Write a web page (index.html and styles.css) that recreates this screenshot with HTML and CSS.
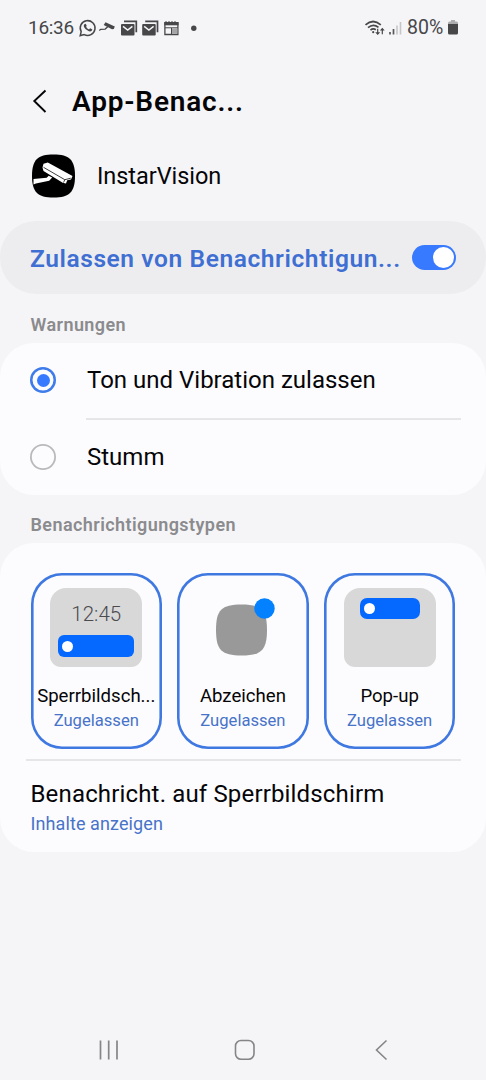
FILE: index.html
```html
<!DOCTYPE html>
<html lang="de">
<head>
<meta charset="utf-8">
<meta name="viewport" content="width=device-width, initial-scale=1">
<title>App-Benachrichtigungen</title>
<link rel="stylesheet" href="styles.css">
</head>
<body>
<div class="screen">
  <header class="status">
    <span class="clock">16:36</span>
    <svg class="status-icons" width="122" height="20" viewBox="0 0 122 20">
      <path d="M2.2 17.6 3.2 13.7A7.400 7.400 0 1 1 6.200 16.600Z" fill="none" stroke="#47474a" stroke-width="1.500"/>
      <path d="M6.400 6.200q1-.9 1.700.2l.5 1.200q.2.5-.5 1.200 1 1.900 2.900 2.700l.9-1q.3-.3.8 0l1.300.8q.7.500-.1 1.300-1.400 1.500-3.500.5Q7.200 11.600 6 9q-.7-1.800.4-2.800Z" fill="#47474a"/>
      <path d="m27.500 4.300 9.300 4.200-1 2.500-1.800.3-8.300-4.200Z" fill="#47474a"/>
      <path d="m29.700 8.800-2.500 2.300-4.500.2-1.400 1.200" fill="none" stroke="#47474a" stroke-width="1.300"/>
      <g id="mail">
        <path d="M46 3.300h12.300v11" fill="none" stroke="#47474a" stroke-width="1.700"/>
        <rect x="43" y="6" width="13.500" height="11.600" rx="1" fill="#47474a"/>
        <path d="m45 8.300 4.700 3.700 4.700-3.700" fill="none" stroke="#f5f5f8" stroke-width="1.500"/>
      </g>
      <use href="#mail" x="21.200"/>
      <path d="M86.900 4.800h13v11.700h-13Z" fill="none" stroke="#47474a" stroke-width="1.300"/>
      <path d="M86.300 4h14.200v3.300H86.300Z" fill="#47474a"/>
      <path d="M88 3v2M91 3v2M94 3v2M97 3v2" stroke="#47474a"/>
      <path d="M86.900 9.800h13M93.500 10v6.500" stroke="#47474a"/>
      <path d="M94 10.300h5.300v5.500H94Z" fill="#a5a5a8"/>
      <circle cx="115.800" cy="10.300" r="2.700" fill="#47474a"/>
    </svg>
    <span class="status-gap"></span>
    <svg class="signal" width="40" height="20" viewBox="0 0 40 20" fill="none">
      <path d="M1.500 6.800Q9 .2 16.800 6.800M4 9.600Q9.200 5.200 14.500 9.300M6.500 12.200Q9 10 11.800 11.800" stroke="#47474a" stroke-width="1.700"/>
      <circle cx="9.200" cy="14.200" r="1.100" fill="#47474a"/>
      <path d="M13.700 10.700v5M18.300 11.300v4.900" stroke="#47474a" stroke-width="1.200"/>
      <path d="m11.200 14.200 2.500 2.900 2.500-2.900ZM15.900 12.600l2.400-2.900 2.400 2.900Z" fill="#47474a"/>
      <path d="M26 14v2.500M29.500 11v5.500" stroke="#58585b" stroke-width="1.700"/>
      <path d="M33 7.500v9M36.500 4v12.500" stroke="#c6c6c9" stroke-width="1.600"/>
    </svg>
    <span class="percent">80%</span>
    <svg class="battery" width="10" height="15" viewBox="0 0 10 15">
      <path d="M3 0h4v1.500h1.500Q10 1.500 10 3v2H0V3Q0 1.500 1.500 1.500H3Z" fill="#adadb0"/>
      <path d="M0 4h10v9q0 1.500-1.500 1.500h-7Q0 14.500 0 13Z" fill="#47474a"/>
    </svg>
  </header>

  <div class="titlebar">
    <svg class="back" width="15" height="24" viewBox="0 0 15 24"><path d="M13.500 1.500 2.300 12l11.200 11" fill="none" stroke="#050508" stroke-width="1.900"/></svg>
    <h1 class="title">App-Benac...</h1>
  </div>

  <div class="app">
    <svg class="app-icon" width="44" height="44" viewBox="0 0 44 44">
      <path d="M22.500.5C38.500.5 44 6 44 22s-5.500 21.500-21.500 21.500S1 38 1 22 6.500.5 22.500.5Z" fill="#000"/>
      <path d="m12.500 9.700 4.300-1.200L41.500 22l-1.500 3.500-3.800.8-1.200 3.200-3.300-.7L12.500 17l-1-3.500Z" fill="#fff"/>
      <path d="m12.500 13.300 21.300 12.400 6-1.500M33.800 25.700l-1.300 2.800" fill="none" stroke="#111" stroke-width=".8"/>
      <path d="m2.500 25 13.200-1.300 2-2 3.500 1.800-3 3.300-13.300 2.700-2.400 1Z" fill="#fff"/>
    </svg>
    <span class="app-name">InstarVision</span>
  </div>

  <div class="master">
    <span class="master-label">Zulassen von Benachrichtigun...</span>
    <span class="toggle"><span class="knob"></span></span>
  </div>

  <h2 class="section section-alerts">Warnungen</h2>
  <div class="card alerts">
    <div class="option">
      <span class="radio checked"></span><span class="option-label">Ton und Vibration zulassen</span>
    </div>
    <div class="rule inset"></div>
    <div class="option">
      <span class="radio"></span><span class="option-label">Stumm</span>
    </div>
  </div>

  <h2 class="section section-types">Benachrichtigungstypen</h2>
  <div class="card types">
    <div class="tiles">
      <div class="tile">
        <div class="preview lock"><span class="preview-time">12:45</span><span class="pill"><i class="dot"></i></span></div>
        <span class="tile-name">Sperrbildsch...</span><span class="tile-state">Zugelassen</span>
      </div>
      <div class="tile">
        <div class="preview-badge"><svg width="66" height="79" viewBox="-3 0 66 79"><path d="M28.500 16.500C48.500 16.500 54 22 54 42s-5.500 25.500-25.500 25.500S3 62 3 42 8.500 16.500 28.500 16.500Z" fill="#999"/><circle cx="51.500" cy="20.500" r="10.200" fill="#0381fe"/></svg></div>
        <span class="tile-name">Abzeichen</span><span class="tile-state">Zugelassen</span>
      </div>
      <div class="tile">
        <div class="preview popup"><span class="pill"><i class="dot"></i></span></div>
        <span class="tile-name">Pop-up</span><span class="tile-state">Zugelassen</span>
      </div>
    </div>
    <div class="rule wide"></div>
    <div class="lockscreen">
      <span class="lockscreen-title">Benachricht. auf Sperrbildschirm</span>
      <span class="lockscreen-value">Inhalte anzeigen</span>
    </div>
  </div>

  <nav class="navbar">
    <svg width="20" height="20" viewBox="0 0 20 20"><path d="M1.500.5v19M9.700.5v19M18 .5v19" stroke="#858588" stroke-width="1.700"/></svg>
    <svg width="22" height="22" viewBox="0 0 22 22"><rect x="1.500" y="1.500" width="18.500" height="18.800" rx="5.500" fill="none" stroke="#858588" stroke-width="1.600"/></svg>
    <svg width="13" height="22" viewBox="0 0 13 22"><path d="M11.500 1.500 1.500 11l10 9.500" fill="none" stroke="#858588" stroke-width="1.600"/></svg>
  </nav>
</div>
</body>
</html>
```
FILE: styles.css
```css
* { box-sizing: border-box; }
body { margin: 0; background: #f5f5f8; font-family: Roboto, "Liberation Sans", sans-serif; color: #050508; }
h1, h2 { margin: 0; }
span { white-space: nowrap; }
svg { display: block; flex: none; }
.screen { width: 486px; height: 1080px; display: flex; flex-direction: column; overflow: hidden; }

.status { height: 55px; display: flex; align-items: center; padding: 0 28px; color: #47474a; }
.clock { width: 50px; font-size: 19px; letter-spacing: -0.300px; }
.status-gap { flex: 1; }
.percent { width: 41px; font-size: 19.500px; margin-left: 3px; }

.titlebar { height: 92px; display: flex; align-items: center; padding-left: 32px; gap: 25px; }
.title { font-size: 28px; line-height: 36px; font-weight: 600; letter-spacing: 0.800px; padding-top: 1px; }

.app { height: 58px; display: flex; align-items: center; padding-left: 31px; gap: 22px; }
.app-name { font-size: 23.500px; letter-spacing: -0.050px; }

.master { height: 73px; margin-top: 16px; border-radius: 36px; background: #ededef; display: flex; align-items: center; justify-content: space-between; padding: 0 30px; }
.master-label { font-size: 24.500px; font-weight: 600; letter-spacing: 0.600px; padding-top: 2px; color: #3f6fd2; }
.toggle { width: 44px; height: 25px; border-radius: 13px; background: #387aff; padding: 2px; display: flex; justify-content: flex-end; }
.knob { width: 21px; height: 21px; border-radius: 50%; background: #fff; }

.section { font-size: 18px; font-weight: 600; letter-spacing: 0.420px; color: #8b8b8e; padding-left: 30.500px; display: flex; align-items: center; }
.section-alerts { height: 49px; padding-top: 11px; }
.section-types { height: 48px; padding-top: 11px; }
.card { background: #fcfcfe; border-radius: 34px; }
.alerts { height: 152px; }
.option { height: 75px; display: flex; align-items: center; padding-left: 30px; gap: 31px; }
.option-label { font-size: 24px; padding-bottom: 1px; }
.radio { width: 26px; height: 26px; margin-bottom: 1px; box-shadow: inset 0 0 0 1.800px #b9b9bc; border-radius: 50%; display: grid; place-items: center; }
.radio.checked { box-shadow: inset 0 0 0 2.500px #3f7bea; }
.radio.checked::after { content: ""; width: 13px; height: 13px; border-radius: 50%; background: #387aff; }
.rule { height: 2px; background: #e6e6e8; }
.inset { margin: 0 25px 0 86px; }
.wide { margin: 10px 25px 0 26px; }

.types { height: 309px; padding-top: 30px; }
.tiles { display: grid; grid-template-columns: repeat(3, 131.500px); gap: 15.200px; padding-left: 30.500px; }
.tile { height: 176px; box-shadow: inset 0 0 0 2.600px #3f78e0; border-radius: 31px; display: flex; flex-direction: column; align-items: center; padding-top: 15px; }
.preview { width: 92px; height: 79px; border-radius: 16px 16px 11px 11px; background: #d8d8d9; display: flex; flex-direction: column; align-items: center; }
.preview-badge { height: 79px; }
.preview-time { font-size: 20.500px; line-height: 24px; margin-top: 14px; font-weight: 300; color: #4b4b4e; }
.pill { display: flex; align-items: center; background: #0568ff; border-radius: 6px; padding-left: 4px; }
.lock .pill { width: 76px; height: 22px; margin-top: 9px; }
.popup .pill { width: 60px; height: 21px; margin-top: 10px; border-radius: 7px; }
.dot { flex: none; width: 11px; height: 11px; border-radius: 50%; background: #fff; }
.tile-name { font-size: 18.600px; line-height: 24px; margin-top: 17px; }
.tile-state { font-size: 16.600px; line-height: 24px; padding-top: 1px; color: #4773c9; }

.lockscreen { display: flex; flex-direction: column; padding: 17px 0 0 30.500px; }
.lockscreen-title { font-size: 24px; line-height: 32px; letter-spacing: 0.160px; }
.lockscreen-value { font-size: 18px; line-height: 26px; letter-spacing: 0.100px; padding-top: 1px; color: #4773c9; }

.navbar { margin-top: 167px; height: 60px; display: grid; grid-template-columns: 135px 140.500px auto; align-items: center; padding: 1px 98px 0 99px; }
```
